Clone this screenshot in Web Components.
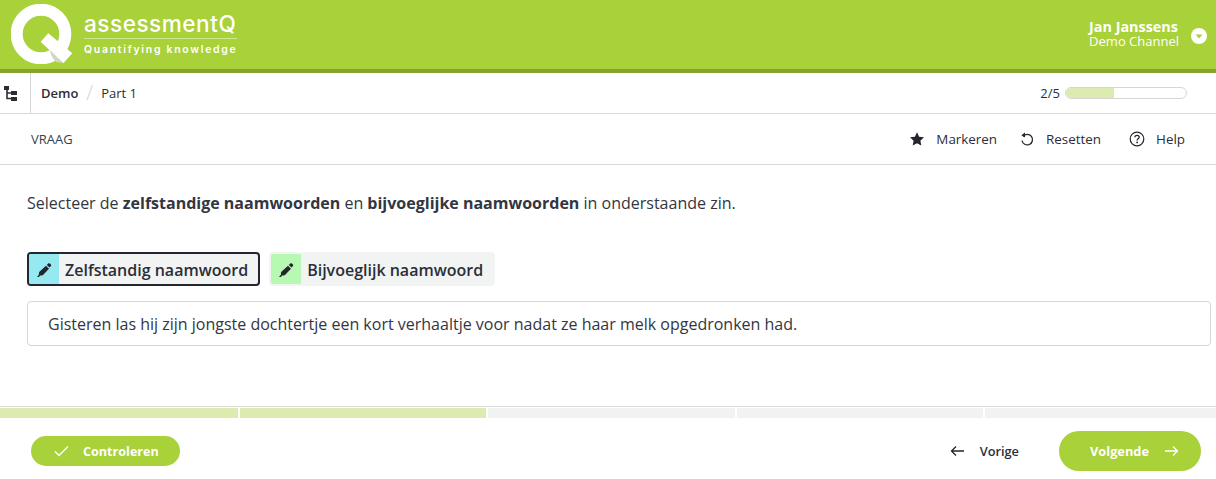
<!DOCTYPE html>
<html><head><meta charset="utf-8"><title>assessmentQ</title>
<style>
html,body{margin:0;padding:0;background:#fff;overflow:hidden}
body{width:1216px;height:479px;font-family:"Open Sans",sans-serif;color:#2b2e38;display:flex;flex-direction:column}
</style></head><body>
<aq-header></aq-header>
<aq-crumbs></aq-crumbs>
<aq-toolbar></aq-toolbar>
<aq-question>
  <span slot="prompt">Selecteer de <b>zelfstandige naamwoorden</b> en <b>bijvoeglijke naamwoorden</b> in onderstaande zin.</span>
  <aq-marker slot="markers" color="#96e9f1" active>Zelfstandig naamwoord</aq-marker>
  <aq-marker slot="markers" color="#b7f9b3">Bijvoeglijk naamwoord</aq-marker>
  <span slot="sentence">Gisteren las hij zijn jongste dochtertje een kort verhaaltje voor nadat ze haar melk opgedronken had.</span>
</aq-question>
<aq-segments></aq-segments>
<aq-footer></aq-footer>
<script>
function def(name,html){customElements.define(name,class extends HTMLElement{
  constructor(){super();this.attachShadow({mode:'open'}).innerHTML=typeof html==='function'?html(this):html;}
});}
const PEN='<svg width="16" height="16" viewBox="0 0 16 16"><path fill="#23262e" d="M1 15l2-2.500c-.3-1.200 0-2.300.7-3L10 3.700l3 3-6 6.200c-.9.6-2 .9-3 .6L3 15zM10.800 3l1.500-1.500c.5-.5 1.200-.5 1.600 0l1 1c.5.5.5 1.100 0 1.600l-1.400 1.500z"/></svg>';
def('aq-header',`<style>
:host{display:flex;height:69px;background:#a9d139;border-bottom:4px solid #86a32d;justify-content:space-between;flex:none;color:#fff;overflow:hidden}
.logo{display:flex;margin-left:11px;margin-top:4px;gap:11px}
.brand{display:flex;flex-direction:column;margin-top:7px}
.n{font:500 22.600px/26px Inter,"Open Sans",sans-serif;letter-spacing:.5px;height:26px;white-space:nowrap}
.t{border-top:1px solid #cfe68a;margin-top:1px;padding-top:3px;font:600 10.500px/16px Inter,sans-serif;letter-spacing:1.700px;width:153px;white-space:nowrap}
.user{display:flex;align-items:center;margin:17px 9px 0 0;height:34px;gap:12px}
.who{text-align:right}
.who b{display:block;font:700 14.400px/15px "Open Sans",sans-serif;margin-right:1px}
.who span{display:block;font:400 13px/15px "Open Sans",sans-serif}
.user svg{margin-top:4px}
svg{display:block}
</style>
<div class="logo"><svg width="62" height="60" viewBox="0 0 62 60"><circle cx="30" cy="30" r="24.300" fill="none" stroke="#fff" stroke-width="12"/><path d="M37.300 29.300l24 20-9 10-22.600-21.600z" fill="#fff"/><path d="M39 46L52 59l-7-1c-3-3-5.500-7-6-12z" fill="#cfd6c4"/></svg>
<div class="brand"><div class="n">assessmentQ</div><div class="t">Quantifying knowledge</div></div></div>
<div class="user"><div class="who"><b>Jan Janssens</b><span>Demo Channel</span></div>
<svg width="16" height="16" viewBox="0 0 16 16"><circle cx="8" cy="8" r="8" fill="#fff"/><path d="M4.500 6.500h7L8 10.500z" fill="#a9d139"/></svg></div>`);
def('aq-crumbs',`<style>
:host{display:flex;height:40px;border-bottom:1px solid #d9d9d9;flex:none;align-items:stretch;font-size:13px}
.tree{width:30px;border-right:1px solid #d4d4d4;display:flex;align-items:center}
.tree svg{margin-left:4px;margin-top:1px}
.path{display:flex;align-items:center;margin-left:10px;flex:1}
.path b{font-weight:600}
.sep{color:#d4d4d4;margin:0 8px;font-size:20px;font-weight:300;line-height:1}
.prog{display:flex;align-items:center;gap:5px;margin-right:29px}
.bar{width:120px;height:10px;border:1px solid #d6d6d6;border-radius:6px;overflow:hidden;background:#fff}
.bar i{display:block;width:40%;height:100%;background:#dcecb0}
</style>
<div class="tree"><svg width="14" height="15" viewBox="0 0 14 15"><path d="M3 2v10.500h5M3 7h5" fill="none" stroke="#2a2d33" stroke-width="1.600"/><rect x="0" y="0" width="5" height="4" fill="#2a2d33"/><rect x="7" y="5" width="6" height="4" fill="#2a2d33"/><rect x="7" y="11" width="6" height="4" fill="#2a2d33"/></svg></div>
<div class="path"><b>Demo</b><span class="sep">/</span><span>Part 1</span></div>
<div class="prog"><span>2/5</span><div class="bar"><i></i></div></div>`);
def('aq-toolbar',`<style>
:host{display:flex;height:50px;border-bottom:1px solid #d9d9d9;flex:none;align-items:center;justify-content:space-between;font-size:13.400px}
.l{margin-left:31px;color:#3c3f48;font-size:13px}
.r{display:flex;margin-right:31px;font-weight:500}
.a{display:flex;align-items:center;gap:11px}
.a+.a{margin-left:22px}
.a.h{margin-left:28px}
svg{display:block}
</style>
<div class="l">VRAAG</div>
<div class="r">
<div class="a"><svg width="16" height="16" viewBox="0 0 16 16"><path fill="#23262e" d="M8 1.200l2.100 4.500 4.900.6-3.600 3.400.9 4.900L8 12.200l-4.300 2.400.9-4.900L1 6.300l4.900-.6z"/></svg><span>Markeren</span></div>
<div class="a"><svg width="16" height="16" viewBox="0 0 16 16"><path d="M4.100 5.300A5.300 5.300 0 1 1 3 9.500" fill="none" stroke="#23262e" stroke-width="1.300"/><path d="M6.500 2.300v5L2.800 5z" fill="#23262e" transform="translate(-.5 -.8)"/></svg><span>Resetten</span></div>
<div class="a h"><svg width="16" height="16" viewBox="0 0 16 16"><circle cx="8" cy="8" r="6.800" fill="none" stroke="#23262e" stroke-width="1.200"/><path d="M5.900 6.300c0-1.300 1-2 2.200-2s2.100.8 2.100 1.900c0 1.500-2.100 1.500-2.100 3.200" fill="none" stroke="#23262e" stroke-width="1.300"/><circle cx="8.100" cy="11.400" r=".9" fill="#23262e"/></svg><span>Help</span></div>
</div>`);
def('aq-question',`<style>
:host{display:flex;flex-direction:column;flex:1;min-height:0;padding:0 5px 0 27px}
.p{font-size:16px;line-height:20px;margin-top:28px;color:#33363f}
.m{display:flex;gap:9px;margin-top:39px}
.s{margin-top:15px;border:1px solid #d6d6d6;border-radius:4px;height:43px;display:flex;align-items:center;padding-left:20px;padding-bottom:0;font-size:16px;color:#33363f;box-sizing:content-box}
</style>
<div class="p"><slot name="prompt"></slot></div>
<div class="m"><slot name="markers"></slot></div>
<div class="s"><slot name="sentence"></slot></div>`);
def('aq-marker',el=>`<style>
:host{display:block;height:34px;box-sizing:border-box;background:#f2f4f4;border-radius:4px;padding:2px;font-size:16px;font-weight:600;color:#2b2e38}
:host([active]){border:2px solid #23262e;padding:0}
.w{display:flex;height:30px;align-items:center}
.i{width:30px;height:100%;display:flex;align-items:center;justify-content:center;border-radius:2px 0 0 2px}
.t{padding:1px 10px 0 6px;white-space:nowrap;line-height:30px}
svg{display:block;margin-top:2px}
</style>
<div class="w"><div class="i" style="background:${el.getAttribute('color')}">${PEN}</div><div class="t"><slot></slot></div></div>`);
def('aq-segments',`<style>
:host{display:flex;flex:none;border-top:1px solid #d9d9d9;gap:2px;padding-top:1px;height:10px;background:#fff}
i{flex:1;display:block;background:#f1f3f3}
i.d{background:#dcecb0}
</style><i class="d" style="flex:none;width:238px"></i><i class="d" style="flex:none;width:246px"></i><i style="flex:none;width:247px"></i><i style="flex:none;width:246px"></i><i></i>`);
def('aq-footer',`<style>
:host{display:flex;flex:none;height:61px;box-sizing:border-box;padding-top:5px;align-items:center;justify-content:space-between;font-size:12.600px}
.c{display:flex;align-items:center;height:30px;margin-left:31px;border-radius:15px;background:#a9d139;color:#fff;font-weight:700;width:149px;box-sizing:border-box;padding-left:23px;gap:14px}
.r{display:flex;align-items:center;margin-right:15px}
.v{display:flex;align-items:center;gap:15px;font-weight:600;font-size:12.800px;margin-right:40px;color:#2b2e38}
.n{display:flex;align-items:center;height:40px;width:142px;box-sizing:border-box;padding-left:31px;gap:15px;border-radius:20px;background:#a9d139;color:#fff;font-weight:700;font-size:12.800px}
svg{display:block}
</style>
<div class="c"><svg width="15" height="12" viewBox="0 0 15 12"><path d="M1 6.500l4 4L14 1.500" fill="none" stroke="#fff" stroke-width="1.500"/></svg><span>Controleren</span></div>
<div class="r"><div class="v"><svg width="15" height="12" viewBox="0 0 15 12"><path d="M14 6H1.500M6 1.500L1.500 6 6 10.500" fill="none" stroke="#23262e" stroke-width="1.300"/></svg><span>Vorige</span></div>
<div class="n"><span>Volgende</span><svg width="15" height="12" viewBox="0 0 15 12"><path d="M1 6h12.500M9 1.500L13.500 6 9 10.500" fill="none" stroke="#fff" stroke-width="1.300"/></svg></div></div>`);
</script>
</body></html>
